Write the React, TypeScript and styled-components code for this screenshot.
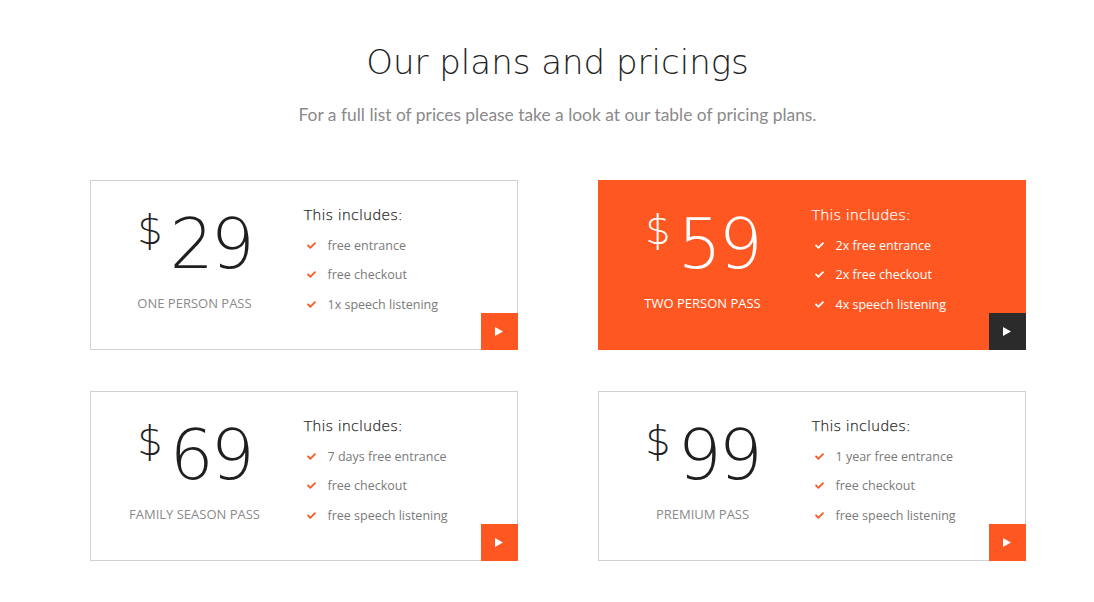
import React from "react";
import styled, { createGlobalStyle } from "styled-components";
import { FaCheck } from "react-icons/fa";

const Global = createGlobalStyle`
  html, body { margin: 0; padding: 0; background: #fff; }
  * { box-sizing: border-box; }
`;

const ORANGE = "#ff5722";

const Page = styled.main`
  width: 1094px;
  padding: 40px 0 0 21px;
  display: flex;
  flex-direction: column;
  align-items: center;
`;

const Title = styled.h1`
  margin: 0;
  font-family: "DejaVu Sans", sans-serif;
  font-weight: 300;
  font-size: 34px;
  line-height: 44px;
  color: #1f1f1f;
`;

const Subtitle = styled.p`
  margin: 20px 0 0;
  font-family: Lato, sans-serif;
  font-size: 17.4px;
  line-height: 22px;
  color: #8a8a8a;
`;

const Grid = styled.section`
  margin-top: 54px;
  display: grid;
  grid-template-columns: 428px 428px;
  grid-auto-rows: 170px;
  column-gap: 80px;
  row-gap: 41px;
`;

const Card = styled.article<{ $featured?: boolean }>`
  position: relative;
  border: 1px solid ${(p) => (p.$featured ? ORANGE : "#d2d2d2")};
  background: ${(p) => (p.$featured ? ORANGE : "#fff")};
  display: grid;
  grid-template-columns: 208px 1fr;
  column-gap: 5px;
  padding-top: 24px;
`;

const PriceCol = styled.div`
  display: flex;
  flex-direction: column;
  align-items: center;
`;

const Price = styled.div<{ $light?: boolean }>`
  display: flex;
  align-items: flex-start;
  font-family: "DejaVu Sans", sans-serif;
  color: ${(p) => (p.$light ? "#fff" : "#1f1f1f")};
  margin-top: 3px;
`;

const Currency = styled.span`
  font-size: 40px;
  line-height: 44px;
  font-weight: 300;
  margin-top: 0;
  margin-right: 7px;
`;

const Amount = styled.span`
  font-size: 69px;
  line-height: 72px;
  font-weight: 300;
  letter-spacing: -3px;
`;

const PassName = styled.div<{ $light?: boolean }>`
  margin-top: 15px;
  font-family: "Open Sans", sans-serif;
  font-size: 13px;
  line-height: 16px;
  text-transform: uppercase;
  color: ${(p) => (p.$light ? "#fff" : "#8a8a8a")};
`;

const InfoCol = styled.div`
  display: flex;
  flex-direction: column;
`;

const InfoTitle = styled.h3<{ $light?: boolean }>`
  margin: 0;
  font-family: "DejaVu Sans", sans-serif;
  font-weight: 300;
  font-size: 14.5px;
  line-height: 20px;
  color: ${(p) => (p.$light ? "#fff" : "#1f1f1f")};
  -webkit-text-stroke: 0.25px currentColor;
`;

const List = styled.ul`
  list-style: none;
  margin: 11px 0 0;
  padding: 0;
  display: flex;
  flex-direction: column;
  gap: 11.5px;
`;

const Item = styled.li<{ $light?: boolean }>`
  display: flex;
  align-items: center;
  height: 18px;
  font-family: "Open Sans", sans-serif;
  font-size: 12.5px;
  color: ${(p) => (p.$light ? "#fff" : "#7a7a7a")};
  svg {
    color: ${(p) => (p.$light ? "#fff" : ORANGE)};
    margin: 0 12px 0 3px;
    flex: none;
  }
`;

const Go = styled.button<{ $dark?: boolean }>`
  position: absolute;
  right: -1px;
  bottom: -1px;
  width: 37px;
  height: 37px;
  border: 0;
  padding: 0;
  background: ${(p) => (p.$dark ? "#2b2b2b" : ORANGE)};
  display: flex;
  align-items: center;
  justify-content: center;
  cursor: pointer;
`;

type Plan = { price: string; name: string; items: string[]; featured?: boolean };

const plans: Plan[] = [
  { price: "29", name: "One person pass", items: ["free entrance", "free checkout", "1x speech listening"] },
  { price: "59", name: "Two person pass", items: ["2x free entrance", "2x free checkout", "4x speech listening"], featured: true },
  { price: "69", name: "Family season pass", items: ["7 days free entrance", "free checkout", "free speech listening"] },
  { price: "99", name: "Premium pass", items: ["1 year free entrance", "free checkout", "free speech listening"] },
];

export default function App() {
  return (
    <>
      <Global />
      <Page>
        <Title>Our plans and pricings</Title>
        <Subtitle>For a full list of prices please take a look at our table of pricing plans.</Subtitle>
        <Grid>
          {plans.map((p) => (
            <Card key={p.price} $featured={p.featured}>
              <PriceCol>
                <Price $light={p.featured}>
                  <Currency>$</Currency>
                  <Amount>{p.price}</Amount>
                </Price>
                <PassName $light={p.featured}>{p.name}</PassName>
              </PriceCol>
              <InfoCol>
                <InfoTitle $light={p.featured}>This includes:</InfoTitle>
                <List>
                  {p.items.map((it) => (
                    <Item key={it} $light={p.featured}>
                      <FaCheck size={9} />
                      {it}
                    </Item>
                  ))}
                </List>
              </InfoCol>
              <Go $dark={p.featured} aria-label="Select plan">
                <svg width="8" height="9" viewBox="0 0 8 9">
                  <polygon points="0,0 8,4.5 0,9" fill="#fff" />
                </svg>
              </Go>
            </Card>
          ))}
        </Grid>
      </Page>
    </>
  );
}
